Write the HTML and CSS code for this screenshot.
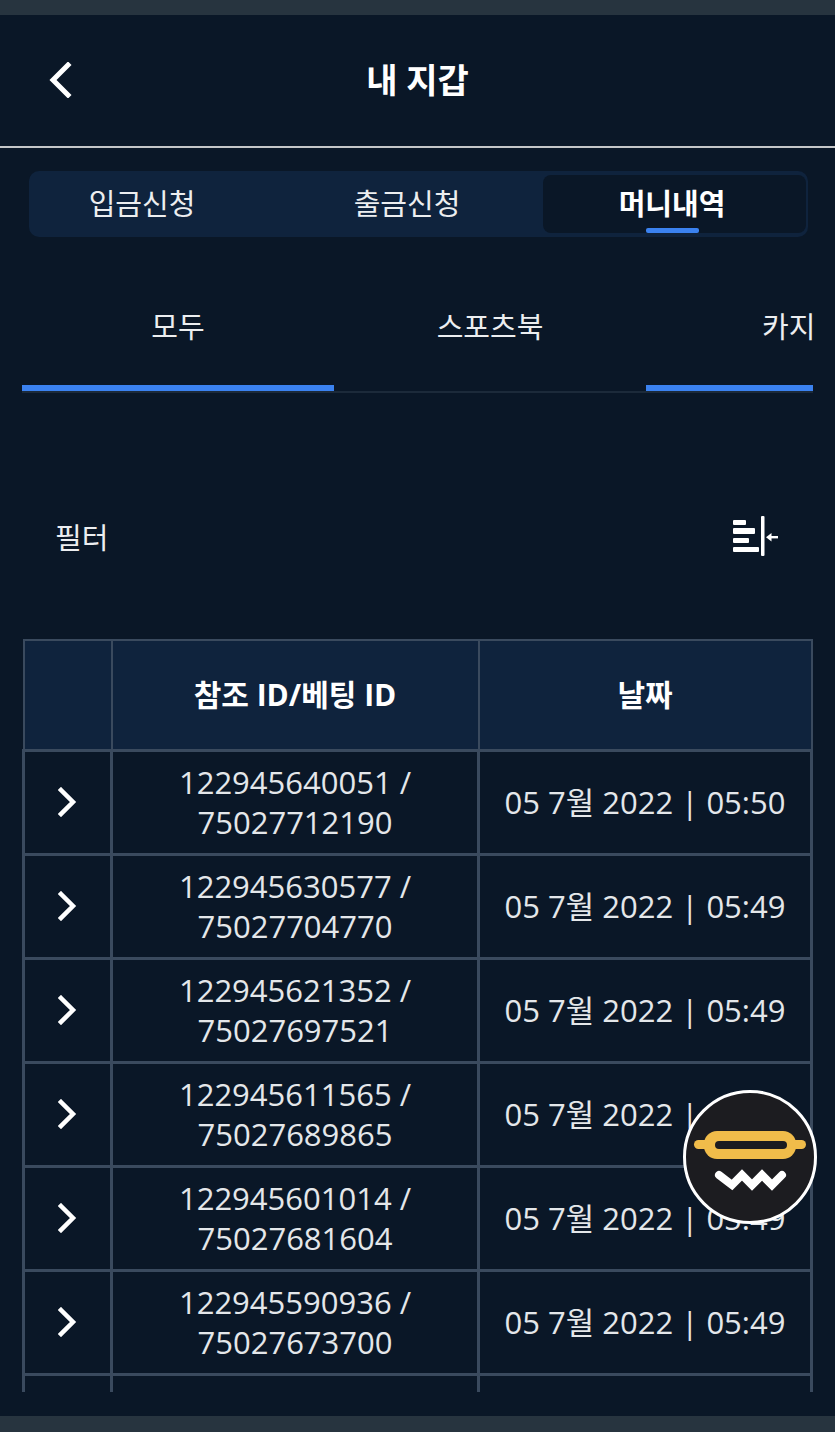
FILE: index.html
```html
<!DOCTYPE html>
<html lang="ko">

<head>
    <meta charset="UTF-8">
    <meta name="viewport" content="width=device-width, initial-scale=1.0">
    <title>내 지갑</title>
    <link rel="stylesheet" href="styles.css">
</head>

<body>
    <div class="status-bar"></div>

    <header class="top-header">
        <svg class="back-icon" width="24" height="36" viewBox="0 0 24 36">
            <path d="M20 3 L5 18 L20 33" fill="none" stroke="#fff" stroke-width="5" stroke-linecap="square" />
        </svg>
        <h1>내 지갑</h1>
    </header>

    <main>
        <div class="wallet-tabs">
            <div class="wallet-tab">입금신청</div>
            <div class="wallet-tab">출금신청</div>
            <div class="wallet-tab active">머니내역</div>
        </div>

        <div class="category-tabs">
            <div class="category-tab active">모두</div>
            <div class="category-tab">스포츠북</div>
            <div class="category-tab active">카지노</div>
        </div>

        <div class="filter-row">
            <span class="filter-label">필터</span>
            <svg class="filter-icon" width="46" height="40" viewBox="0 0 46 40">
                <g fill="#fff">
                    <rect x="0" y="4" width="13" height="5" rx="1" />
                    <rect x="0" y="12" width="22" height="6" rx="1" />
                    <rect x="0" y="22" width="16" height="5" rx="1" />
                    <rect x="0" y="31" width="26" height="5" rx="1" />
                    <rect x="28" y="0" width="3.500" height="40" rx="1" />
                    <rect x="37" y="20" width="8" height="2.400" />
                    <path d="M33 21.200 L38.500 17 V25.400 Z" />
                </g>
            </svg>
        </div>

        <div class="table-wrap">
            <table class="money-table">
                <thead>
                    <tr>
                        <th class="col-toggle"></th>
                        <th class="col-id">참조 ID/베팅 ID</th>
                        <th>날짜</th>
                    </tr>
                </thead>
                <tbody>
                    <tr>
                        <td><svg class="row-icon" width="20" height="30" viewBox="0 0 20 30"><path d="M3 3 L15 15 L3 27" /></svg></td>
                        <td>122945640051 /<br>75027712190</td>
                        <td>05 7월 2022 | 05:50</td>
                    </tr>
                    <tr>
                        <td><svg class="row-icon" width="20" height="30" viewBox="0 0 20 30"><path d="M3 3 L15 15 L3 27" /></svg></td>
                        <td>122945630577 /<br>75027704770</td>
                        <td>05 7월 2022 | 05:49</td>
                    </tr>
                    <tr>
                        <td><svg class="row-icon" width="20" height="30" viewBox="0 0 20 30"><path d="M3 3 L15 15 L3 27" /></svg></td>
                        <td>122945621352 /<br>75027697521</td>
                        <td>05 7월 2022 | 05:49</td>
                    </tr>
                    <tr>
                        <td><svg class="row-icon" width="20" height="30" viewBox="0 0 20 30"><path d="M3 3 L15 15 L3 27" /></svg></td>
                        <td>122945611565 /<br>75027689865</td>
                        <td>05 7월 2022 | 05:49</td>
                    </tr>
                    <tr>
                        <td><svg class="row-icon" width="20" height="30" viewBox="0 0 20 30"><path d="M3 3 L15 15 L3 27" /></svg></td>
                        <td>122945601014 /<br>75027681604</td>
                        <td>05 7월 2022 | 05:49</td>
                    </tr>
                    <tr>
                        <td><svg class="row-icon" width="20" height="30" viewBox="0 0 20 30"><path d="M3 3 L15 15 L3 27" /></svg></td>
                        <td>122945590936 /<br>75027673700</td>
                        <td>05 7월 2022 | 05:49</td>
                    </tr>
                    <tr>
                        <td></td>
                        <td></td>
                        <td></td>
                    </tr>
                </tbody>
            </table>
        </div>
    </main>

    <div class="bottom-bar"></div>

    <!-- 떠 있는 버튼 -->
    <div class="float-btn">
        <svg width="134" height="134" viewBox="0 0 134 134">
            <rect x="11" y="50" width="112" height="9" rx="4.500" fill="#f0bc4a" />
            <rect x="21" y="41" width="92" height="28" rx="13" fill="#f0bc4a" />
            <rect x="32" y="51" width="72" height="8" rx="4" fill="#1c1c20" />
            <polyline points="36,85 49,95 59,85 69,95 79,85 89,95 99,85" fill="none" stroke="#fff" stroke-width="8" stroke-linecap="round" stroke-linejoin="miter" />
        </svg>
    </div>
</body>

</html>
```

FILE: styles.css
```css
* {
    margin: 0;
    padding: 0;
    box-sizing: border-box;
    font-family: 'Open Sans', 'Noto Sans CJK KR', sans-serif;
}

html,
body {
    height: 1432px;
    overflow: hidden;
}

body {
    background-color: #0a1727;
    color: #fff;
    display: flex;
    flex-direction: column;
    position: relative;
}

.status-bar {
    height: 15px;
    background: #27343f;
}

.top-header {
    height: 133px;
    padding-bottom: 4px;
    border-bottom: 2px solid #c4c6c8;
    display: flex;
    justify-content: center;
    align-items: center;
    position: relative;
}

.top-header h1 {
    font-size: 34px;
    font-weight: 700;
}

.back-icon {
    position: absolute;
    left: 48px;
    top: 47px;
}

main {
    flex: 1;
    min-height: 0;
    padding: 23px 22px 0 22px;
}

.wallet-tabs {
    display: flex;
    height: 66px;
    margin: 0 5px 0 7px;
    padding: 4px 2px 4px 0;
    background: #0f233d;
    border-radius: 10px;
}

.wallet-tab {
    display: flex;
    justify-content: center;
    align-items: center;
    padding-bottom: 4px;
    font-size: 29px;
    color: #eceef0;
    border-radius: 8px;
    position: relative;
}

.wallet-tab:nth-child(1) {
    flex: 0 0 226px;
}

.wallet-tab:nth-child(2) {
    flex: 0 0 288px;
    padding-left: 16px;
}

.wallet-tab.active {
    flex: 1;
    padding-right: 5px;
    background: #0a1727;
    color: #fff;
    font-weight: 700;
}

.wallet-tab.active::after {
    content: '';
    position: absolute;
    left: 103px;
    bottom: 0;
    width: 53px;
    height: 5px;
    border-radius: 2px;
    background: #3b82f0;
}

.category-tabs {
    display: flex;
    margin-top: 48px;
    overflow: hidden;
    height: 108px;
    border-bottom: 2px solid #1c2a3a;
}

.category-tab {
    flex: 0 0 312px;
    height: 106px;
    padding-top: 20px;
    text-align: center;
    font-size: 29px;
    line-height: 44px;
    color: #eceef0;
}

.category-tab.active {
    border-bottom: 6px solid #3b82f0;
}

.filter-row {
    display: flex;
    justify-content: space-between;
    align-items: center;
    height: 40px;
    margin-top: 123px;
    padding: 0 34px 0 33px;
}

.filter-label {
    font-size: 29px;
    color: #eceef0;
}

.table-wrap {
    height: 753px;
    margin-top: 83px;
    overflow: hidden;
}

.money-table {
    width: 791px;
    border-collapse: collapse;
    table-layout: fixed;
    font-size: 31px;
    line-height: 40px;
    color: #e4e7ea;
}

.money-table th,
.money-table td {
    border: 3px solid #3a4a5e;
    text-align: center;
    vertical-align: middle;
}

.money-table th {
    height: 110px;
    background: #0f233d;
    color: #fff;
    font-size: 30px;
    font-weight: 700;
    border-width: 2px;
}

.money-table td {
    height: 104px;
}

.col-toggle {
    width: 88px;
}

.col-id {
    width: 367px;
}

.row-icon {
    display: block;
    margin: 0 auto;
}

.row-icon path {
    fill: none;
    stroke: #fff;
    stroke-width: 4.500;
    stroke-linecap: square;
}

.bottom-bar {
    height: 16px;
    background: #27343f;
}

.float-btn {
    position: absolute;
    left: 683px;
    top: 1090px;
    width: 134px;
    height: 134px;
    background: #1c1c20;
    border: 3px solid #fff;
    border-radius: 50%;
    overflow: hidden;
}

.float-btn svg {
    display: block;
    margin: -3px;
}
```
